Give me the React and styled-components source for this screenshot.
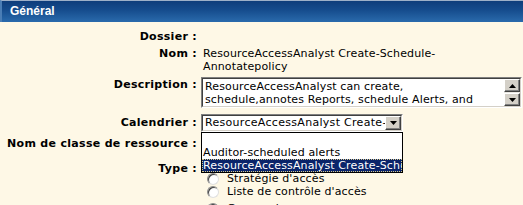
import React from "react";
import styled, { createGlobalStyle } from "styled-components";

const GlobalStyle = createGlobalStyle`
  html, body {
    margin: 0;
    background: #fef8e6;
    font-family: "DejaVu Sans", Verdana, sans-serif;
    font-size: 11px;
    letter-spacing: 0.13px;
    color: #000;
  }
`;

const Panel = styled.div`
  width: 523px;
  height: 205px;
  overflow: hidden;
  background: #fef8e6;
`;

const Header = styled.div`
  height: 22px;
  box-sizing: border-box;
  border-top: 1px solid #9db0c8;
  border-left: 2px solid #4a7db5;
  background: linear-gradient(#0e3d7b, #164d8e 45%, #2a6aac);
  color: #fff;
  font: bold 12px "Liberation Sans", Arial, sans-serif;
  letter-spacing: 0;
  line-height: 20px;
  padding-left: 8px;
`;

const Form = styled.div`
  display: grid;
  grid-template-columns: 197px 1fr;
  column-gap: 4px;
  row-gap: 4px;
  padding-top: 8px;
`;

const Label = styled.div`
  text-align: right;
  font-weight: bold;
  letter-spacing: 0.3px;
  line-height: 13px;
  white-space: nowrap;
  margin-top: ${(p) => p.$mt || 0}px;
`;

const Value = styled.div`
  position: relative;
  line-height: 13px;
  min-height: 13px;
  padding-left: ${(p) => p.$pl || 0}px;
  margin-top: ${(p) => p.$mt || 0}px;
`;

const Inset = styled.div`
  box-sizing: border-box;
  border-style: solid;
  border-width: 1px;
  border-color: #808080 #fff #fff #808080;
  background: #fff;
`;

const InsetInner = styled.div`
  border-style: solid;
  border-width: 1px;
  border-color: #404040 #d4d0c8 #d4d0c8 #404040;
  display: flex;
  height: 100%;
  box-sizing: border-box;
  overflow: hidden;
`;

const TextArea = styled(Inset)`
  width: 321px;
  height: 31px;
`;

const TextLines = styled.div`
  flex: 1;
  padding: 1px 2px;
  line-height: 13px;
  white-space: nowrap;
  overflow: hidden;
`;

const ScrollBar = styled.div`
  width: 16px;
  display: flex;
  flex-direction: column;
  justify-content: space-between;
  background: #eae8e3;
`;

const Btn = styled.div`
  box-sizing: border-box;
  width: 16px;
  height: ${(p) => p.$h || 13}px;
  background: #d4d0c8;
  border-style: solid;
  border-width: 1px;
  border-color: #fff #404040 #404040 #fff;
  box-shadow: inset -1px -1px 0 #808080;
  display: flex;
  align-items: center;
  justify-content: center;
`;

const Select = styled(Inset)`
  width: 202px;
  height: 18px;
`;

const SelectText = styled.div`
  flex: 1;
  padding-left: 2px;
  line-height: 14px;
  letter-spacing: 0.3px;
  white-space: nowrap;
  overflow: hidden;
`;

const DropList = styled.div`
  position: absolute;
  top: 18px;
  left: 0;
  width: 202px;
  height: 41px;
  box-sizing: border-box;
  border: 1px solid #000;
  background: #fff;
  z-index: 5;
  overflow: hidden;
`;

const Option = styled.div`
  height: 13px;
  line-height: 13px;
  padding-left: 1px;
  white-space: nowrap;
  overflow: hidden;
  box-sizing: border-box;
  background: ${(p) => (p.$selected ? "#0a246a" : "#fff")};
  color: ${(p) => (p.$selected ? "#fff" : "#000")};
  outline: ${(p) => (p.$selected ? "1px dotted #d6c78a" : "none")};
  outline-offset: -1px;
`;

const RadioList = styled.div`
  display: flex;
  flex-direction: column;
  margin-top: 10px;
  padding-left: 6px;
`;

const RadioRow = styled.label`
  display: flex;
  align-items: center;
  height: 13px;
  gap: 8px;
  margin-top: ${(p) => p.$mt || 0}px;
  white-space: nowrap;
`;

const Radio = styled.span`
  width: 12px;
  height: 12px;
  box-sizing: border-box;
  border-radius: 50%;
  border: 1px solid #8a8a8a;
  border-right-color: #e0e0e0;
  border-bottom-color: #e0e0e0;
  background: radial-gradient(circle at 60% 60%, #fff 40%, #e6e6e6);
  box-shadow: inset 1px 1px 0 #404040;
`;

const Arrow = ({ up }) => (
  <svg width="7" height="4" viewBox="0 0 7 4">
    <path d={up ? "M3.5 0 L7 4 L0 4 Z" : "M0 0 L7 0 L3.5 4 Z"} fill="#000" />
  </svg>
);

export default function App() {
  return (
    <Panel>
      <GlobalStyle />
      <Header>Général</Header>
      <Form>
        <Label>Dossier :</Label>
        <Value />

        <Label>Nom :</Label>
        <Value $pl={2}>
          ResourceAccessAnalyst Create-Schedule-
          <br />
          Annotatepolicy
        </Value>

        <Label $mt={1}>Description :</Label>
        <Value>
          <TextArea>
            <InsetInner>
              <TextLines>
                ResourceAccessAnalyst can create,
                <br />
                schedule,annotes Reports, schedule Alerts, and
              </TextLines>
              <ScrollBar>
                <Btn>
                  <Arrow up />
                </Btn>
                <Btn>
                  <Arrow />
                </Btn>
              </ScrollBar>
            </InsetInner>
          </TextArea>
        </Value>

        <Label $mt={4}>Calendrier :</Label>
        <Value $mt={2}>
          <Select>
            <InsetInner>
              <SelectText>ResourceAccessAnalyst Create-Schedule-Annotatepolicy</SelectText>
              <Btn $h={14}>
                <Arrow />
              </Btn>
            </InsetInner>
          </Select>
          <DropList>
            <Option>&nbsp;</Option>
            <Option>Auditor-scheduled alerts</Option>
            <Option $selected>ResourceAccessAnalyst Create-Schedule-Annotatepolicy</Option>
          </DropList>
        </Value>

        <Label $mt={1}>Nom de classe de ressource :</Label>
        <Value />

        <Label $mt={8}>Type :</Label>
        <Value $mt={8}>
          <RadioList>
            <RadioRow>
              <Radio />
              Stratégie d'accès
            </RadioRow>
            <RadioRow>
              <Radio />
              Liste de contrôle d'accès
            </RadioRow>
            <RadioRow $mt={4}>
              <Radio />
              Groupe de ressources
            </RadioRow>
          </RadioList>
        </Value>
      </Form>
    </Panel>
  );
}
